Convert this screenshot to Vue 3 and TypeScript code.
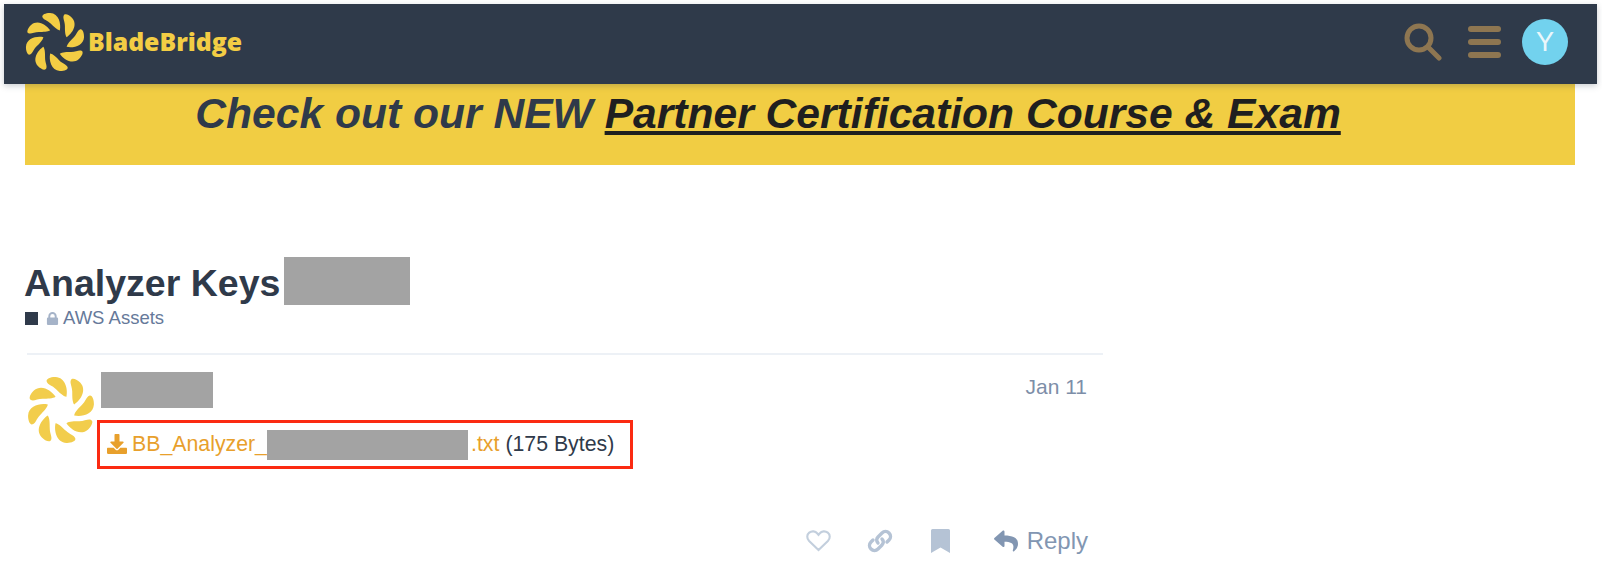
<script setup lang="ts">
const blades: number[] = [0, 45, 90, 135, 180, 225, 270, 315]
const bladePath = 'M5,-12 C6.500,-19 4,-29.500 -5,-30 C-9,-30.200 -14,-28.500 -13,-25.800 C-12,-23 -8,-22.500 -4.500,-19 C-1.500,-16 2,-12.500 5,-12 Z'
</script>

<template>
  <div class="page">
    <header class="topbar">
      <div class="brand">
        <svg class="logo" viewBox="-31 -31 62 62" aria-hidden="true">
          <path v-for="a in blades" :key="a" :d="bladePath" :transform="`rotate(${a})`" />
        </svg>
        <span class="wordmark">BladeBridge</span>
      </div>
      <div class="tools">
        <svg class="search" viewBox="0 0 38 38" aria-hidden="true">
          <circle cx="15" cy="15" r="12" />
          <line x1="24" y1="24" x2="35" y2="35" />
        </svg>
        <div class="burger"><span></span><span></span><span></span></div>
        <div class="user">Y</div>
      </div>
    </header>

    <div class="banner">
      <span class="banner-text">Check out our NEW <a class="banner-link">Partner Certification Course &amp; Exam</a></span>
    </div>

    <main class="topic">
      <div class="title-row">
        <h1>Analyzer Keys</h1>
        <div class="redact title-redact"></div>
      </div>
      <div class="category">
        <span class="swatch"></span>
        <svg class="lock" viewBox="0 0 14 14" aria-hidden="true">
          <path d="M2.5 6V4.6a4.5 4.5 0 0 1 9 0V6h.3A1.2 1.2 0 0 1 13 7.200v5.600A1.200 1.200 0 0 1 11.800 14H2.200A1.200 1.200 0 0 1 1 12.800V7.200A1.200 1.200 0 0 1 2.200 6zM4.600 6h4.800V4.600a2.400 2.400 0 0 0-4.800 0z" />
        </svg>
        <span class="cat-name">AWS Assets</span>
      </div>

      <div class="post">
        <svg class="avatar" viewBox="-31 -31 62 62" aria-hidden="true">
          <path v-for="a in blades" :key="a" :d="bladePath" :transform="`rotate(${a})`" />
        </svg>
        <div class="post-body">
          <div class="post-head">
            <div class="redact name-redact"></div>
            <span class="date">Jan 11</span>
          </div>
          <div class="attachment">
            <svg class="download" viewBox="0 0 512 512" aria-hidden="true">
              <path d="M216 0h80c13.300 0 24 10.700 24 24v168h87.700c17.800 0 26.700 21.500 14.100 34.100L269.700 378.300c-7.500 7.500-19.800 7.500-27.300 0L90.100 226.100c-12.600-12.600-3.700-34.100 14.100-34.100H192V24c0-13.300 10.700-24 24-24zm296 376v112c0 13.300-10.700 24-24 24H24c-13.300 0-24-10.700-24-24V376c0-13.300 10.700-24 24-24h146.700l49 49c20.100 20.100 52.500 20.100 72.600 0l49-49H488c13.300 0 24 10.700 24 24z" />
            </svg>
            <span class="file">BB_Analyzer_</span>
            <div class="redact file-redact"></div>
            <span class="file ext">.txt</span>
            <span class="size">(175 Bytes)</span>
          </div>
        </div>
      </div>

      <div class="actions">
        <svg class="heart" viewBox="0 0 26 23" aria-hidden="true">
          <path d="M13 21 L3.200 11.500 C0.400 8.600 0.800 4.800 3.300 2.800 C6 0.600 9.800 1.200 11.600 3.400 L13 5 L14.400 3.400 C16.200 1.200 20 0.600 22.700 2.800 C25.200 4.800 25.600 8.600 22.800 11.500 Z" />
        </svg>
        <svg class="chain" viewBox="0 0 26 26" aria-hidden="true">
          <path d="M11 15 C9 13 9.500 10.500 11 9 L15 5 C17 3 20 3 22 5 C24 7 24 10 22 12 L20 14" />
          <path d="M15 11 C17 13 16.500 15.500 15 17 L11 21 C9 23 6 23 4 21 C2 19 2 16 4 14 L6 12" />
        </svg>
        <svg class="bookmark" viewBox="0 0 19 24" aria-hidden="true">
          <path d="M1.500 0H17.500A1.500 1.500 0 0 1 19 1.500V24L9.500 18.500L0 24V1.500A1.500 1.500 0 0 1 1.500 0Z" />
        </svg>
        <button class="reply">
          <svg class="reply-icon" viewBox="0 0 512 512" aria-hidden="true">
            <path d="M8.309 189.836L184.313 37.851C199.719 24.546 224 35.347 224 56.015v80.053c160.629 1.839 288 34.032 288 186.258 0 61.441-39.581 122.309-83.333 154.132-13.653 9.931-33.111-2.533-28.077-18.631 45.344-145.012-21.507-183.510-176.590-185.742V360c0 20.700-24.300 31.453-39.687 18.164l-176.004-152c-11.071-9.562-11.086-26.753 0-36.328z" />
          </svg>
          <span>Reply</span>
        </button>
      </div>
    </main>
  </div>
</template>

<style>
html, body { margin: 0; background: #fff; }
</style>

<style scoped>
.page {
  width: 1602px;
  height: 584px;
  overflow: hidden;
  box-sizing: border-box;
  padding-top: 4px;
  background: #fff;
  font-family: "Liberation Sans", Arial, sans-serif;
}
.topbar {
  box-sizing: border-box;
  height: 80px;
  margin: 0 5px 0 4px;
  padding: 0 29px 0 21px;
  display: flex;
  align-items: center;
  justify-content: space-between;
  background: #2f3a4a;
  box-shadow: 0 2px 6px rgba(47, 58, 74, 0.25);
  position: relative;
}
.brand { display: flex; align-items: center; gap: 3px; }
.logo { width: 60px; height: 60px; fill: #f3cd44; margin-bottom: 5px; }
.wordmark {
  font-family: "Open Sans", sans-serif;
  font-weight: 800;
  font-size: 24.800px;
  color: #f3cd44;
  margin-bottom: 6px;
}
.tools { display: flex; align-items: center; margin-bottom: 5px; }
.search { width: 38px; height: 38px; fill: none; stroke: #8e7651; stroke-width: 5; stroke-linecap: round; }
.burger { width: 33px; margin-left: 26px; display: flex; flex-direction: column; gap: 7px; }
.burger span { display: block; height: 6px; border-radius: 3px; background: #8e7651; }
.user {
  width: 46px;
  height: 46px;
  margin-left: 21px;
  border-radius: 50%;
  background: #72d2ee;
  color: #eaf7fb;
  font-size: 27px;
  line-height: 46px;
  text-align: center;
}
.banner {
  height: 81px;
  margin: 0 27px 0 25px;
  padding-right: 64px;
  background: #f1cd43;
  text-align: center;
}
.banner-text {
  font-size: 42.600px;
  line-height: 58px;
  font-weight: 700;
  font-style: italic;
  color: #2f3a4a;
}
.banner-link { color: #1f1f1f; text-decoration: underline; }
.topic { width: 1078px; margin: 92px 0 0 25px; }
.title-row { display: flex; align-items: center; height: 48px; gap: 4px; }
h1 { margin: 4px 0 0 -1px; font-size: 37.500px; line-height: 48px; font-weight: 700; color: #2f3a4a; }
.redact { background: #a3a3a3; }
.title-redact { width: 126px; height: 48px; }
.category { display: flex; align-items: center; height: 20px; margin-top: 3px; }
.swatch { width: 13px; height: 13px; background: #2f3a4a; }
.lock { width: 13px; height: 13px; margin-left: 8px; fill: #a5b3c8; }
.cat-name { margin-left: 4px; font-size: 18.500px; color: #66799a; }
.post {
  display: flex;
  margin: 25px 0 0 2px;
  padding-top: 17px;
  border-top: 2px solid #edf1f6;
}
.avatar { width: 68px; height: 68px; margin-top: 4px; fill: #f2cd4c; flex: none; }
.post-body { flex: 1; margin-left: 2px; }
.post-head { display: flex; justify-content: space-between; align-items: flex-start; padding: 0 16px 0 4px; }
.name-redact { width: 112px; height: 36px; }
.date { font-size: 21px; line-height: 30px; color: #7d8ea8; }
.attachment {
  box-sizing: border-box;
  width: 536px;
  height: 49px;
  margin-top: 12px;
  padding-left: 7px;
  display: flex;
  align-items: center;
  border: 3px solid #fb2a12;
  font-size: 21.300px;
}
.download { width: 20px; height: 20px; fill: #e8a02c; margin-right: 5px; position: relative; top: -1px; }
.file { color: #e8a02c; }
.file-redact { width: 201px; height: 30px; }
.ext { margin-left: 3px; }
.size { margin-left: 6px; color: #2f3a4a; }
.actions {
  display: flex;
  align-items: center;
  justify-content: flex-end;
  margin-top: 58px;
  padding-right: 15px;
}
.heart { width: 25px; height: 22px; fill: none; stroke: #c3cfdd; stroke-width: 2.200; }
.chain { width: 26px; height: 26px; margin-left: 36px; fill: none; stroke: #b5c3d5; stroke-width: 3.400; stroke-linecap: round; }
.bookmark { width: 19px; height: 24px; margin-left: 38px; fill: #b5c3d5; }
.reply {
  display: flex;
  align-items: center;
  gap: 9px;
  margin-left: 44px;
  padding: 0;
  border: 0;
  background: none;
  font: inherit;
  font-size: 24px;
  color: #8296b2;
}
.reply-icon { width: 24px; height: 24px; fill: #8296b2; }
</style>
